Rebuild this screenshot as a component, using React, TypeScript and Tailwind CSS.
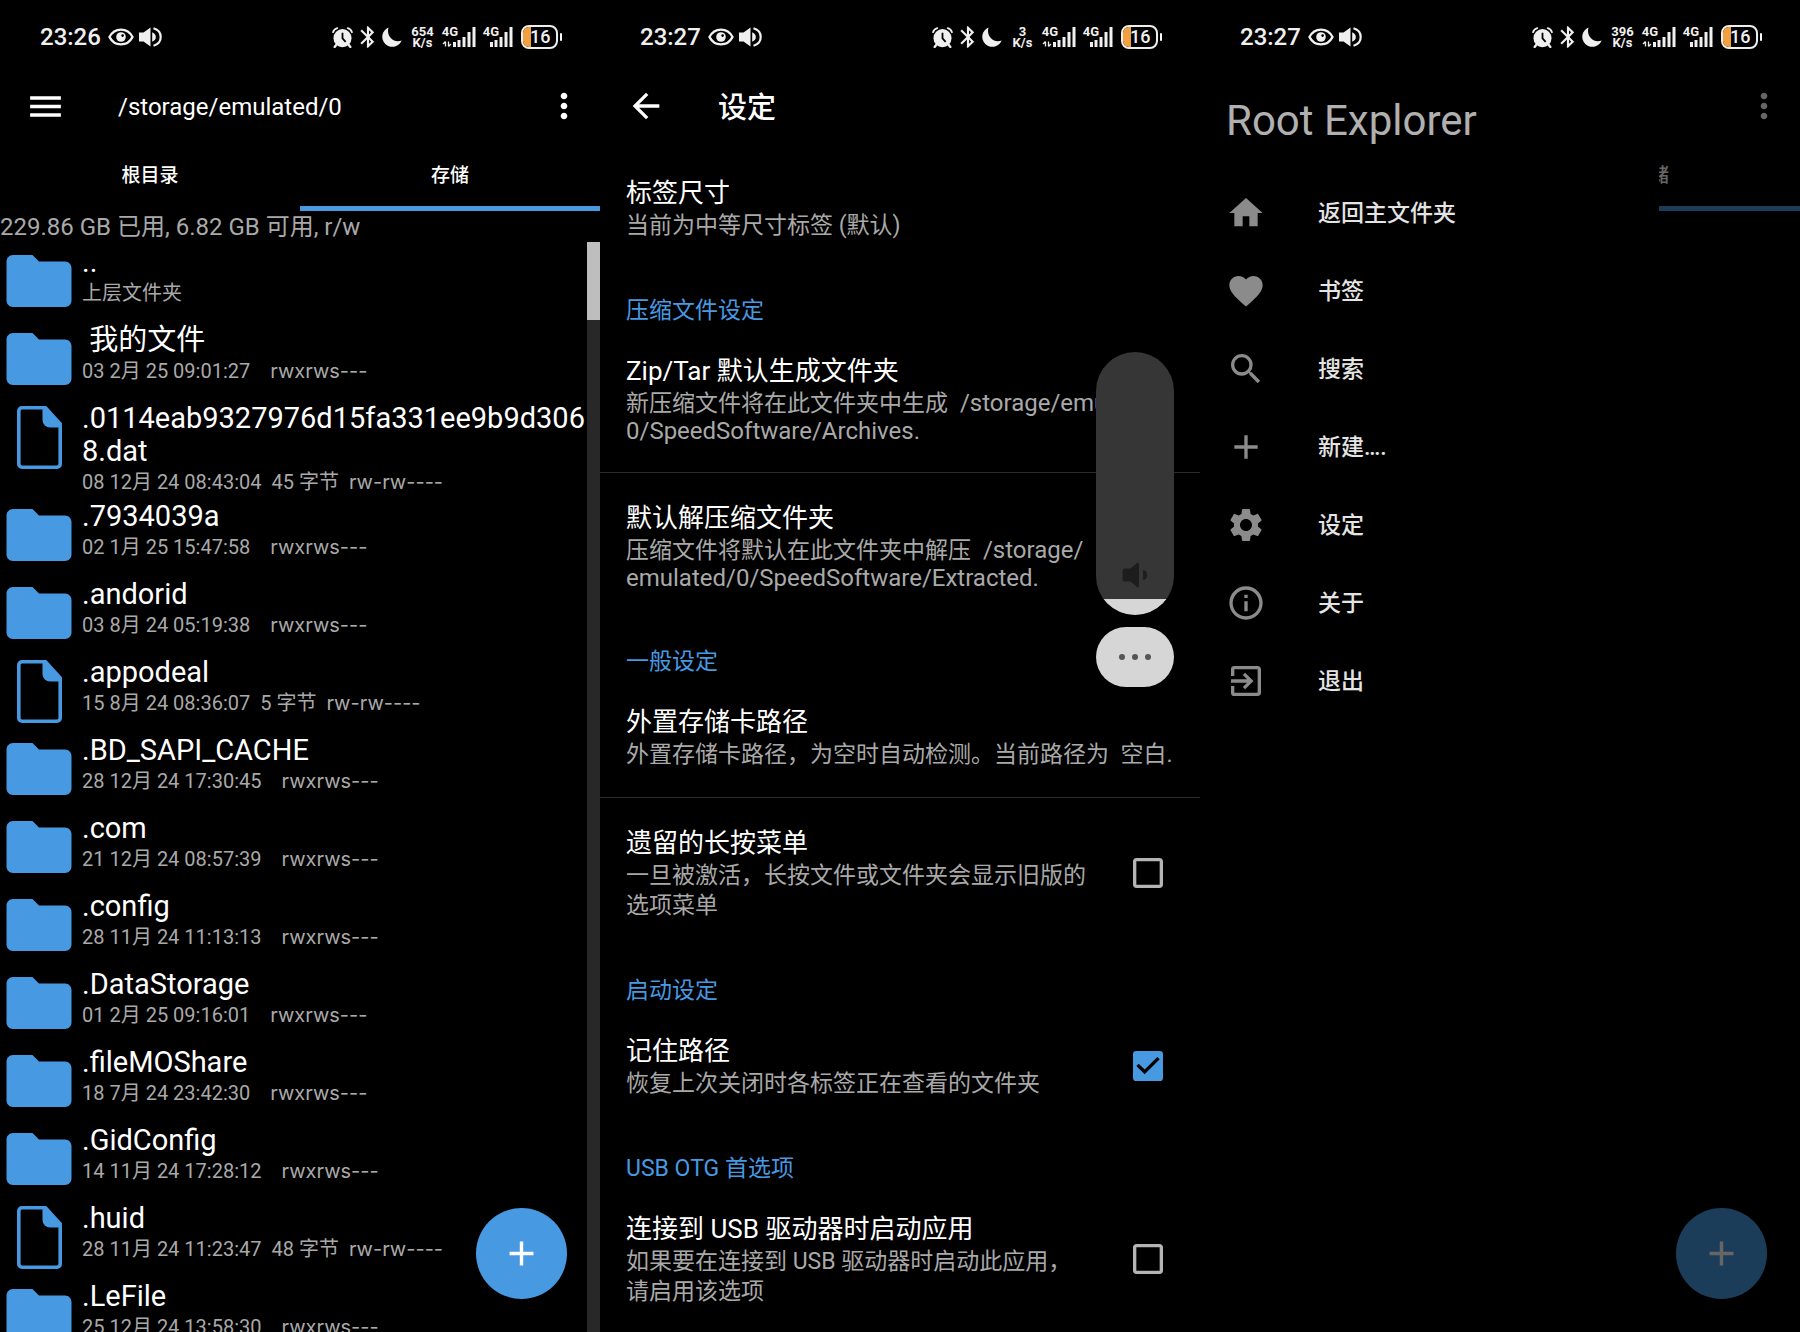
import { useState } from 'react';
import type { ComponentType, ReactNode } from 'react';
import {
  MdAdd,
  MdArrowBack,
  MdBluetooth,
  MdCheckBox,
  MdCheckBoxOutlineBlank,
  MdExitToApp,
  MdFavorite,
  MdFolder,
  MdHome,
  MdInfoOutline,
  MdMenu,
  MdMoreVert,
  MdSearch,
  MdSettings,
} from 'react-icons/md';

type Entry = {
  name: string;
  date?: string;
  size?: string;
  mode?: string;
  note?: string;
  file?: boolean;
};

const entries: Entry[] = [
  { name: '..', note: '上层文件夹' },
  { name: ' 我的文件', date: '03 2月 25 09:01:27', mode: 'rwxrws---' },
  { name: '.0114eab9327976d15fa331ee9b9d3068.dat', date: '08 12月 24 08:43:04', size: '45 字节', mode: 'rw-rw----', file: true },
  { name: '.7934039a', date: '02 1月 25 15:47:58', mode: 'rwxrws---' },
  { name: '.andorid', date: '03 8月 24 05:19:38', mode: 'rwxrws---' },
  { name: '.appodeal', date: '15 8月 24 08:36:07', size: '5 字节', mode: 'rw-rw----', file: true },
  { name: '.BD_SAPI_CACHE', date: '28 12月 24 17:30:45', mode: 'rwxrws---' },
  { name: '.com', date: '21 12月 24 08:57:39', mode: 'rwxrws---' },
  { name: '.config', date: '28 11月 24 11:13:13', mode: 'rwxrws---' },
  { name: '.DataStorage', date: '01 2月 25 09:16:01', mode: 'rwxrws---' },
  { name: '.fileMOShare', date: '18 7月 24 23:42:30', mode: 'rwxrws---' },
  { name: '.GidConfig', date: '14 11月 24 17:28:12', mode: 'rwxrws---' },
  { name: '.huid', date: '28 11月 24 11:23:47', size: '48 字节', mode: 'rw-rw----', file: true },
  { name: '.LeFile', date: '25 12月 24 13:58:30', mode: 'rwxrws---' },
];

type MenuEntry = { label: string; icon: ComponentType<{ size?: number }> };

const menu: MenuEntry[] = [
  { label: '返回主文件夹', icon: MdHome },
  { label: '书签', icon: MdFavorite },
  { label: '搜索', icon: MdSearch },
  { label: '新建….', icon: MdAdd },
  { label: '设定', icon: MdSettings },
  { label: '关于', icon: MdInfoOutline },
  { label: '退出', icon: MdExitToApp },
];

function EyeIcon() {
  return (
    <svg width="26" height="18" viewBox="0 0 26 18" aria-hidden="true">
      <path d="M1.5 9C4 4 8.2 1.6 13 1.6S22 4 24.5 9C22 14 17.8 16.4 13 16.4S4 14 1.5 9Z" fill="none" stroke="currentColor" strokeWidth="2.4" />
      <circle cx="13" cy="9" r="4.8" fill="currentColor" />
      <circle cx="14.6" cy="7.6" r="1.3" fill="#000" />
    </svg>
  );
}

function SoundIcon() {
  return (
    <svg width="23" height="20" viewBox="0 0 23 20" aria-hidden="true">
      <path d="M0 5.5h4.5L11.5.4v19.2L4.5 14.5H0Z" fill="currentColor" />
      <path d="M13.2 5.2c2.6 1.2 3.6 2.8 3.6 4.8s-1 3.6-3.6 4.8Z" fill="currentColor" />
      <path d="M14.5 1.2c4.6 1.3 7.2 4.6 7.2 8.8s-2.6 7.5-7.2 8.8" fill="none" stroke="currentColor" strokeWidth="2.2" />
    </svg>
  );
}

function AlarmIcon() {
  return (
    <svg width="21" height="21" viewBox="0 0 20 20" aria-hidden="true">
      <circle cx="10" cy="10.6" r="8.6" fill="currentColor" />
      <path d="M1 5C1.6 3 3 1.6 5 1M19 5c-.6-2-2-3.400-4-4" fill="none" stroke="currentColor" strokeWidth="1.7" strokeLinecap="round" />
      <path d="M4.5 16.5 2.5 19M15.5 16.5l2 2.5" stroke="currentColor" strokeWidth="2.2" strokeLinecap="round" />
      <path d="M10 5.5v5.3l3 3.4" fill="none" stroke="#000" strokeWidth="1.7" />
    </svg>
  );
}

function MoonIcon() {
  return (
    <svg width="20" height="20" viewBox="0 0 20 20" aria-hidden="true">
      <path d="M6.5.6A10 10 0 1 0 19.6 13.5C12 16.5 4 9.5 6.5.6Z" fill="currentColor" />
    </svg>
  );
}

function Signal({ data }: { data?: boolean }) {
  return (
    <div className={data ? 'flex h-5 w-[34px] items-end justify-end' : 'flex h-5 w-[31px] items-end justify-end'}>
      <span className="self-start text-[13px] leading-[9px] font-bold">4G</span>
      <svg className={data ? '-ml-4 shrink-0' : '-ml-5 shrink-0'} width="34" height="20" viewBox="0 0 34 20" aria-hidden="true">
        {data && <path d="M3.5 14.5v5M1 17l2.500-2.500M6.5 14.5v5M9 17l-2.500 2.500" stroke="currentColor" strokeWidth="1.3" />}
        <path d="M12.5 20v-5M17 20v-7M22 20v-10M27 20V5M32 20V0" stroke="currentColor" strokeWidth="3" />
      </svg>
    </div>
  );
}

function Battery() {
  return (
    <div className="flex items-center">
      <div className="relative flex h-6 w-[37px] items-center overflow-hidden rounded-lg border-2 border-[#eee]">
        <div className="h-full w-2 bg-[#f0a040]" />
        <span className="absolute left-[7px] text-lg leading-5 font-medium">16</span>
      </div>
      <div className="ml-0.5 h-2 w-0.5 rounded-full bg-white" />
    </div>
  );
}

function StatusBar({ time, speed }: { time: string; speed: string }) {
  return (
    <header className="relative z-30 flex h-[74px] shrink-0 items-center pr-[38px] pl-10 text-[#f0f0f0]">
      <time className="mr-[7px] text-2xl leading-6 font-medium">{time}</time>
      <EyeIcon />
      <span className="ml-[5px]">
        <SoundIcon />
      </span>
      <div className="ml-auto flex items-center">
        <AlarmIcon />
        <span className="ml-0.5">
          <MdBluetooth size={26} />
        </span>
        <span className="ml-px">
          <MoonIcon />
        </span>
        <div className="mr-[7px] ml-2 w-[25px] text-center text-[13px] leading-[11px] font-bold">
          {speed}
          <br />
          K/s
        </div>
        <Signal data />
        <span className="mr-2 ml-1.5">
          <Signal />
        </span>
        <Battery />
      </div>
    </header>
  );
}

function FileIcon() {
  return (
    <svg width="45" height="63" viewBox="0 0 45 63" aria-hidden="true">
      <path d="M5 1.8H28.5L43.2 18V58a3.2 3.2 0 0 1-3.2 3.2H5A3.2 3.2 0 0 1 1.8 58V5A3.2 3.2 0 0 1 5 1.8Z" fill="none" stroke="currentColor" strokeWidth="3.6" />
      <path d="M25.5 1H29L44.5 18v3.5H33a7.5 7.5 0 0 1-7.5-7.5Z" fill="currentColor" />
    </svg>
  );
}

function EntryRow({ entry }: { entry: Entry }) {
  return (
    <li className="flex min-h-[78px] items-start">
      <div className="flex h-[78px] w-[78px] shrink-0 items-center justify-center text-[#4799e1]">
        {entry.file ? <FileIcon /> : <MdFolder size={78} />}
      </div>
      <div className="min-w-0 flex-1 pt-1 pl-1">
        <div className="text-[29px] leading-[33px] break-all whitespace-pre-wrap text-white">{entry.name}</div>
        <div className="flex gap-2.5 text-xl leading-7 text-[#a9a9a9]">
          {entry.note && <span>{entry.note}</span>}
          {entry.date && <span>{entry.date}</span>}
          {entry.size && <span>{entry.size}</span>}
          {entry.mode && (
            <span className={entry.size ? 'font-[Inter,sans-serif]' : 'pl-2.5 font-[Inter,sans-serif]'}>{entry.mode}</span>
          )}
        </div>
      </div>
    </li>
  );
}

function Explorer({ path, children }: { path?: string; children?: ReactNode }) {
  return (
    <>
      <div className="flex h-16 shrink-0 items-center pr-4 pl-[25px]">
        <button type="button" aria-label="菜单">
          <MdMenu size={41} />
        </button>
        <h1 className="ml-[52px] flex-1 pt-0.5 text-2xl">{path}</h1>
        <button type="button" aria-label="更多">
          <MdMoreVert size={40} />
        </button>
      </div>
      <div className="grid h-[73px] shrink-0 grid-cols-2 text-[19px] font-medium" role="tablist">
        <button type="button" role="tab" aria-selected="false" className="border-b-[5px] border-transparent pt-2">
          根目录
        </button>
        <button type="button" role="tab" aria-selected="true" className="border-b-[5px] border-[#4799e1] pt-2">
          存储
        </button>
      </div>
      {children}
      <button
        type="button"
        aria-label="新建"
        className="absolute right-[33px] bottom-[33px] flex size-[91px] items-center justify-center rounded-full bg-[#4799e1]"
      >
        <MdAdd size={41} />
      </button>
    </>
  );
}

function ExplorerScreen() {
  return (
    <section className="relative flex min-h-0 flex-col overflow-hidden">
      <StatusBar time="23:26" speed="654" />
      <Explorer path="/storage/emulated/0">
        <p className="shrink-0 pt-0.5 text-2xl leading-[29px] text-[#a9a9a9]">229.86 GB 已用, 6.82 GB 可用, r/w</p>
        <div className="flex min-h-0 flex-1">
          <ul className="min-w-0 flex-1 overflow-hidden">
            {entries.map((entry) => (
              <EntryRow key={entry.name} entry={entry} />
            ))}
          </ul>
          <div className="w-[13px] bg-[#282828]">
            <div className="h-[78px] bg-[#bebebe]" />
          </div>
        </div>
      </Explorer>
    </section>
  );
}

function Category({ children }: { children: ReactNode }) {
  return <h2 className="pt-7 pl-[26px] text-[23px] leading-[30px] text-[#4799e1]">{children}</h2>;
}

// Paths are set one size up from the Chinese text around them
function PathLine({ text }: { text: string }) {
  const start = text.search(/[\x20-\x7e]/);
  return (
    <>
      {text.slice(0, start)}
      <span className="text-2xl leading-7">{text.slice(start)}</span>
    </>
  );
}

type SettingProps = { title: string; lines: string[]; path?: boolean; divider?: boolean; toggle?: boolean; checked?: boolean };

function Setting({ title, lines, path, divider, toggle, checked = false }: SettingProps) {
  const [on, setOn] = useState(checked);
  const text = (
    <div className="min-w-0 flex-1">
      <div className="text-[26px] leading-9 text-white">{title}</div>
      <div className="text-[23px] text-[#a9a9a9]">
        {lines.map((line) => (
          <div key={line} className={path ? 'h-7 leading-7 whitespace-pre' : 'leading-[30px] whitespace-pre'}>
            {path ? <PathLine text={line} /> : line}
          </div>
        ))}
      </div>
    </div>
  );
  const row = divider
    ? 'flex items-center border-b border-[#2c2c2c] py-[27px] pr-8 pl-[26px]'
    : 'flex items-center py-[27px] pr-8 pl-[26px]';

  if (!toggle) return <div className={row}>{text}</div>;

  return (
    <label className={row}>
      {text}
      <input type="checkbox" className="peer sr-only" checked={on} onChange={() => setOn(!on)} />
      <span className={on ? 'text-[#4799e1]' : 'text-[#b4b4b4]'}>
        {on ? <MdCheckBox size={40} /> : <MdCheckBoxOutlineBlank size={40} />}
      </span>
    </label>
  );
}

// Volume panel floats over the settings list
function VolumePanel() {
  const [volume, setVolume] = useState(6);
  return (
    <div className="absolute top-[352px] right-[26px] flex w-[78px] flex-col gap-3">
      <div className="relative flex h-[263px] flex-col justify-end overflow-hidden rounded-full bg-[#363636]">
        <svg className="mb-[11px] self-center text-[#1d1d1d]" width="26" height="26" viewBox="0 0 26 26" aria-hidden="true">
          <path d="M3 6.5h5.5L15 1q2-1 2 1v22q0 2-2 1l-6.500-5.500H3q-2.500 0-2.500-3V9.500q0-3 2.500-3Z" fill="currentColor" />
          <path d="M21 8q4 .5 4 5t-4 5Z" fill="currentColor" />
        </svg>
        <div className="bg-[#d6d6d6]" style={{ height: `${volume}%` }} />
        <input
          type="range"
          aria-label="音量"
          min={0}
          max={100}
          value={volume}
          onChange={(e) => setVolume(Number(e.target.value))}
          className="absolute inset-0 h-full w-full opacity-0 [writing-mode:vertical-lr] [direction:rtl]"
        />
      </div>
      <button
        type="button"
        aria-label="更多音量选项"
        className="flex h-[60px] items-center justify-center gap-[7px] rounded-full bg-[#d6d6d6]"
      >
        <span className="size-1.5 rounded-full bg-[#555]" />
        <span className="size-1.5 rounded-full bg-[#555]" />
        <span className="size-1.5 rounded-full bg-[#555]" />
      </button>
    </div>
  );
}

function SettingsScreen() {
  return (
    <section className="relative flex min-h-0 flex-col overflow-hidden">
      <StatusBar time="23:27" speed="3" />
      <div className="flex h-[74px] shrink-0 items-start pt-3 pl-[26px]">
        <button type="button" aria-label="返回">
          <MdArrowBack size={40} />
        </button>
        <h1 className="ml-[52px] text-[29px] leading-[45px] font-medium">设定</h1>
      </div>
      <Setting title="标签尺寸" lines={['当前为中等尺寸标签 (默认)']} />
      <Category>压缩文件设定</Category>
      <Setting
        title="Zip/Tar 默认生成文件夹"
        lines={['新压缩文件将在此文件夹中生成  /storage/emulated/', '0/SpeedSoftware/Archives.']}
        path
        divider
      />
      <Setting
        title="默认解压缩文件夹"
        lines={['压缩文件将默认在此文件夹中解压  /storage/', 'emulated/0/SpeedSoftware/Extracted.']}
        path
      />
      <Category>一般设定</Category>
      <Setting title="外置存储卡路径" lines={['外置存储卡路径，为空时自动检测。当前路径为  空白.']} divider />
      <Setting title="遗留的长按菜单" lines={['一旦被激活，长按文件或文件夹会显示旧版的', '选项菜单']} toggle />
      <Category>启动设定</Category>
      <Setting title="记住路径" lines={['恢复上次关闭时各标签正在查看的文件夹']} toggle checked />
      <Category>USB OTG 首选项</Category>
      <Setting title="连接到 USB 驱动器时启动应用" lines={['如果要在连接到 USB 驱动器时启动此应用，', '请启用该选项']} toggle />
      <VolumePanel />
    </section>
  );
}

function DrawerScreen() {
  return (
    <section className="relative flex min-h-0 flex-col overflow-hidden">
      <StatusBar time="23:27" speed="396" />
      <Explorer />
      <div className="absolute inset-0 z-10 bg-black/60" />
      <nav className="absolute inset-y-0 left-0 z-20 w-[459px] bg-black pt-24">
        <h2 className="pl-[26px] text-[42px] leading-[50px] text-[#b0b0b0]">Root Explorer</h2>
        <ul className="pt-7">
          {menu.map(({ label, icon: Icon }) => (
            <li key={label}>
              <a href="#" className="flex h-[78px] items-center gap-[52px] pl-[26px] text-[23px] font-medium text-[#e4e4e4]">
                <span className="text-[#8b8b8b]">
                  <Icon size={40} />
                </span>
                <span className="pt-0.5">{label}</span>
              </a>
            </li>
          ))}
        </ul>
      </nav>
    </section>
  );
}

export default function App() {
  return (
    <main
      lang="zh-CN"
      className="grid h-screen grid-cols-3 grid-rows-1 overflow-hidden bg-black font-[Roboto,'Noto_Sans_CJK_SC',sans-serif] text-white"
    >
      <ExplorerScreen />
      <SettingsScreen />
      <DrawerScreen />
    </main>
  );
}
